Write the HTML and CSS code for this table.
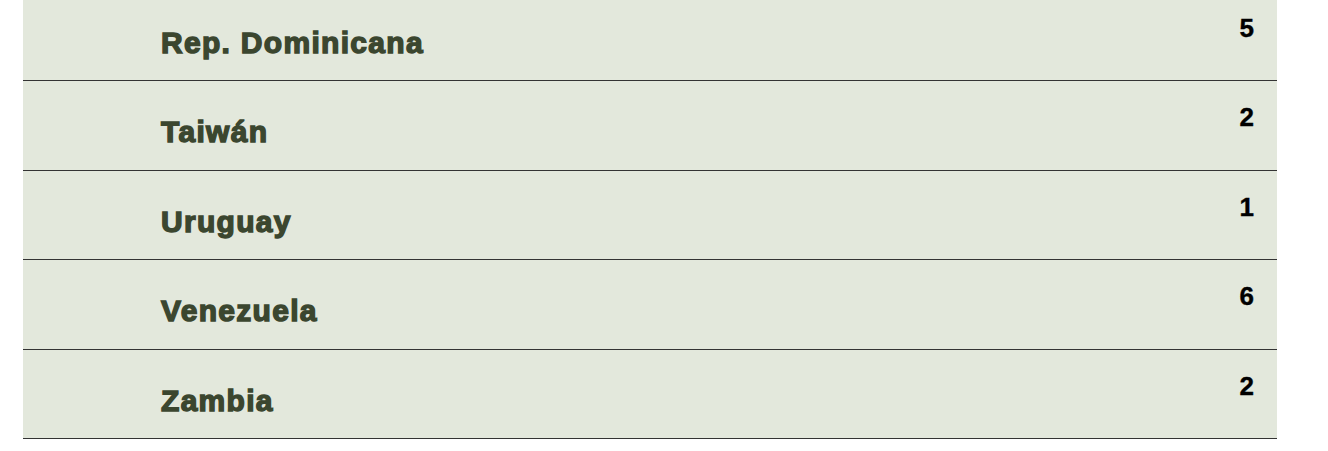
FILE: index.html
```html
<!DOCTYPE html>
<html lang="es">
<head>
<meta charset="utf-8">
<title>Países</title>
<link rel="stylesheet" href="styles.css">
</head>
<body>
<ul class="list">
  <li class="row"><span class="name">Rep. Dominicana</span><span class="count">5</span></li>
  <li class="row"><span class="name">Taiwán</span><span class="count">2</span></li>
  <li class="row"><span class="name">Uruguay</span><span class="count">1</span></li>
  <li class="row"><span class="name">Venezuela</span><span class="count">6</span></li>
  <li class="row"><span class="name">Zambia</span><span class="count">2</span></li>
</ul>
</body>
</html>
```
FILE: styles.css
```css
html, body {
  margin: 0;
  padding: 0;
  background: #ffffff;
}

.list {
  list-style: none;
  margin: -8.5px 0 0 23px;
  padding: 0;
  width: 1254px;
}

.row {
  display: flex;
  justify-content: space-between;
  align-items: flex-start;
  height: 88.5px;
  padding: 0 23px 0 138px;
  background: #e3e8dc;
  border-bottom: 1px solid #333333;
}

.name {
  margin-top: 36px;
  font-family: "Liberation Sans", Arial, sans-serif;
  font-weight: 700;
  font-size: 30px;
  line-height: 1;
  letter-spacing: 1.3px;
  color: #3b462f;
  -webkit-text-stroke: 1.4px #3b462f;
}

.count {
  margin-top: 23px;
  font-family: "Liberation Sans", Arial, sans-serif;
  font-weight: 700;
  font-size: 26px;
  line-height: 1;
  color: #000000;
  -webkit-text-stroke: 0.4px #000000;
}
```
